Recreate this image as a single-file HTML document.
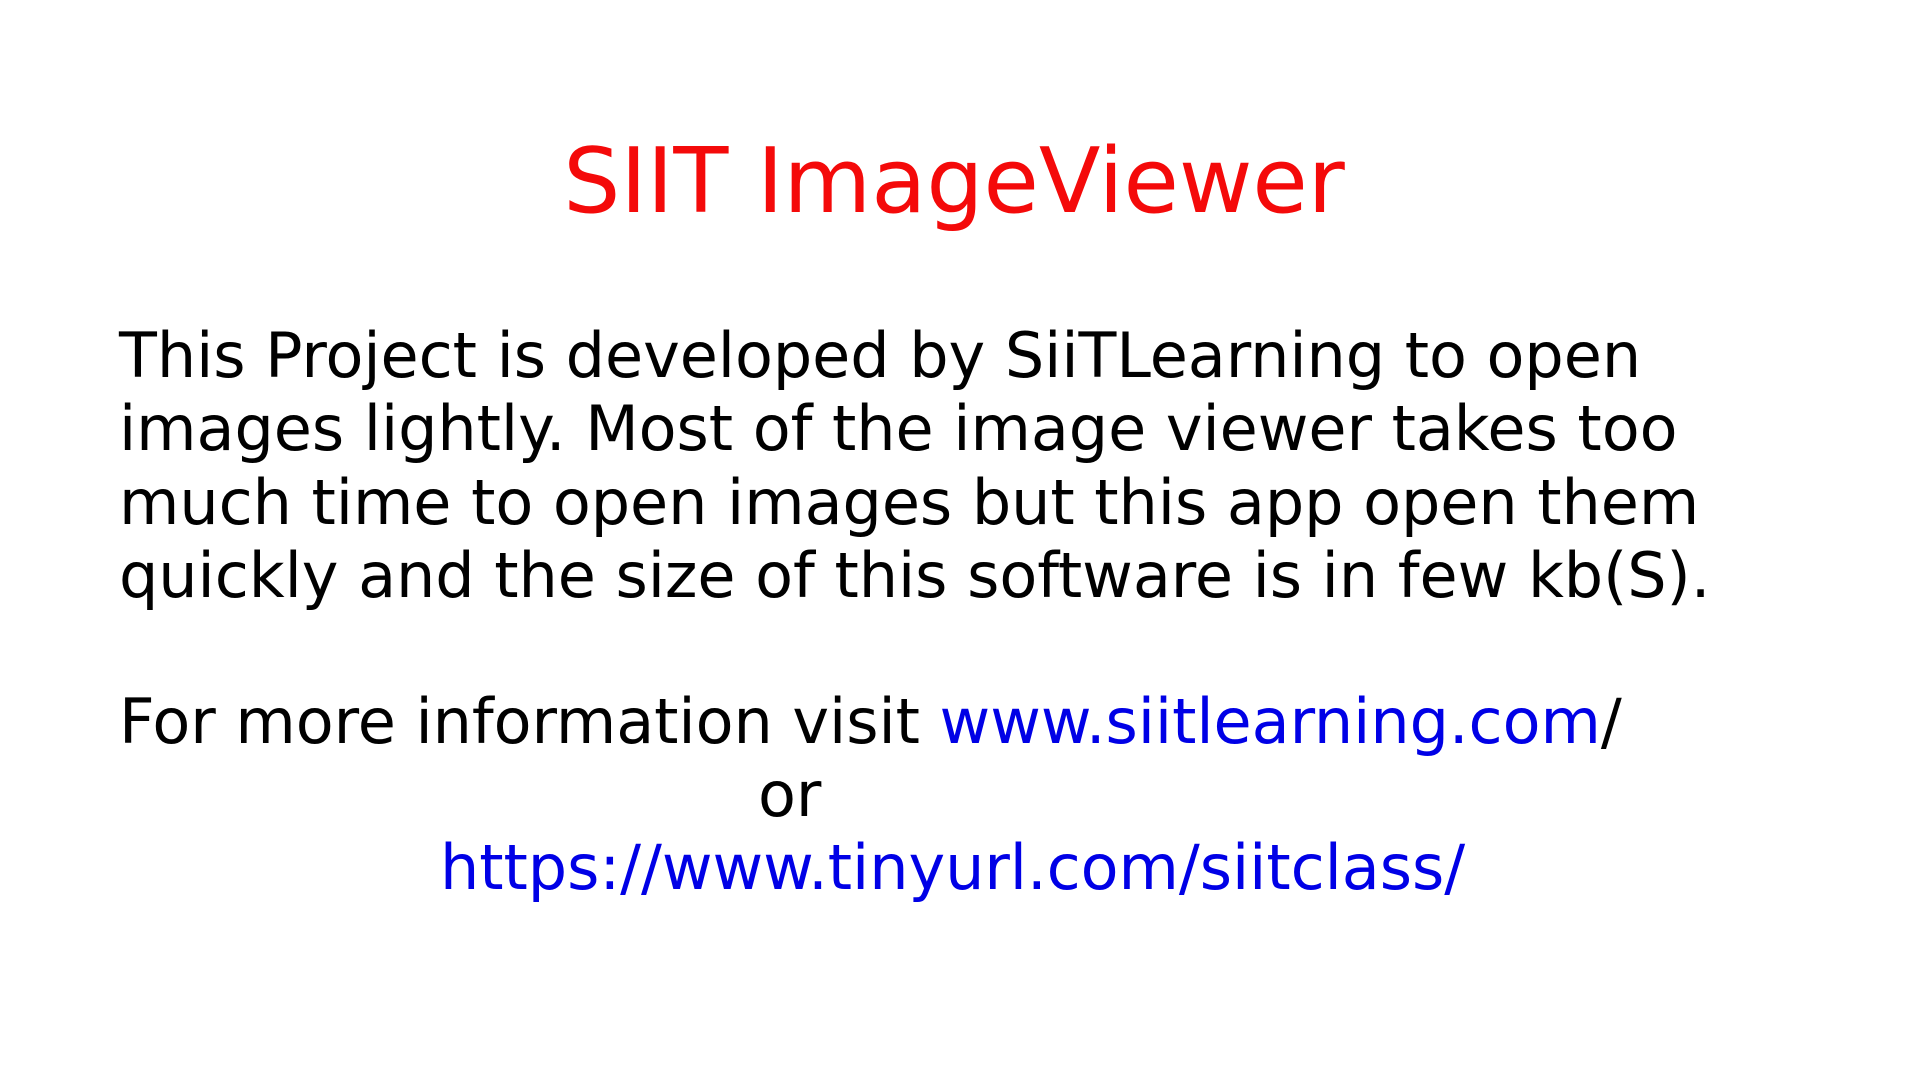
<!DOCTYPE html>
<html><head><meta charset="utf-8"><style>
html,body{margin:0;padding:0;background:#fff;width:1920px;height:1080px;overflow:hidden}
.l{position:absolute;white-space:pre;font-family:"DejaVu Sans","Liberation Sans",sans-serif;line-height:1;color:#000}
.t{font-size:90px;color:#f40a0a;left:-6px;width:1920px;text-align:center;top:137px}
.b{font-size:62px;left:119px;letter-spacing:-0.05px}
.u{color:#0000e6}
</style></head><body>
<div class="l t">SIIT ImageViewer</div>
<div class="l b" style="top:325px">This Project is developed by SiiTLearning to open</div>
<div class="l b" style="top:398px">images lightly. Most of the image viewer takes too</div>
<div class="l b" style="top:472px">much time to open images but this app open them</div>
<div class="l b" style="top:545px">quickly and the size of this software is in few kb(S).</div>
<div class="l b" style="top:691px">For more information visit <span class="u">www.siitlearning.com</span>/</div>
<div class="l b" style="top:764px;left:758px">or</div>
<div class="l b u" style="top:837px;left:440px">https://www.tinyurl.com/siitclass/</div>
</body></html>
